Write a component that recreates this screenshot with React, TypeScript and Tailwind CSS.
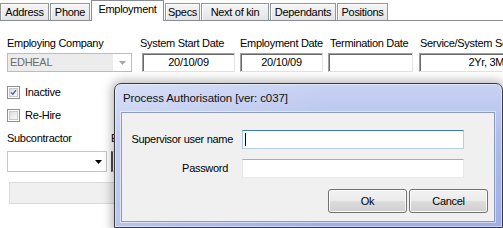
import React from 'react';

const tabs = [
  { label: 'Address', w: 'w-[49px]' },
  { label: 'Phone', w: 'w-[40px]' },
  { label: 'Employment', w: 'w-[73px]', active: true },
  { label: 'Specs', w: 'w-[35px]' },
  { label: 'Next of kin', w: 'w-[68px]' },
  { label: 'Dependants', w: 'w-[66px]' },
  { label: 'Positions', w: 'w-[51px]' },
];

function TabBar() {
  return (
    <div className="flex items-end h-[21px] border-b border-[#898c95]">
      {tabs.map((t, i) =>
        t.active ? (
          <div
            key={t.label}
            className={`${t.w} shrink-0 h-[21px] -mb-px bg-white border border-b-0 border-[#898c95] flex items-start justify-center pt-[2px] ${i > 0 ? 'ml-px' : ''}`}
          >
            {t.label}
          </div>
        ) : (
          <div
            key={t.label}
            className={`${t.w} shrink-0 h-[17px] border border-b-0 border-[#8f969c] bg-[linear-gradient(#f6f6f6,#e4e4e4)] shadow-[inset_1px_1px_0_#ffffff] flex items-center justify-center ${i > 0 ? 'ml-px' : ''}`}
          >
            {t.label}
          </div>
        ),
      )}
    </div>
  );
}

function Sunken({ children, className = '' }: { children?: React.ReactNode; className?: string }) {
  return (
    <div
      className={`h-[19px] bg-white border border-[#a0a0a0] border-r-[#e3e3e3] border-b-[#e3e3e3] shadow-[inset_1px_1px_0_#696969] flex items-center px-[3px] whitespace-nowrap ${className}`}
    >
      {children}
    </div>
  );
}

function CheckBox({ checked, label }: { checked?: boolean; label: string }) {
  return (
    <div className="flex items-center h-[13px] gap-[5px]">
      <div className="w-[13px] h-[13px] border border-[#8e8f8f] bg-white p-px">
        <div className="w-full h-full bg-[linear-gradient(135deg,#dcdcdc,#fbfbfb)] border border-[#c8c8c8] relative">
          {checked && (
            <svg viewBox="0 0 9 9" className="absolute inset-0 w-full h-full">
              <path d="M1.5 4.5 L3.6 6.8 L7.6 1.6" fill="none" stroke="#4a5fa8" strokeWidth="1.7" />
            </svg>
          )}
        </div>
      </div>
      <span>{label}</span>
    </div>
  );
}

function Dialog() {
  return (
    <div className="absolute left-[114px] top-[83px] w-[389px] h-[145px] rounded-t-[7px] border border-[#3a3a3a] bg-[linear-gradient(90deg,rgba(255,255,255,0.28),rgba(255,255,255,0)_55%),linear-gradient(180deg,#c8d3f3,#adbcec_40%,#9eaee6)] shadow-[0_0_10px_3px_rgba(0,0,0,0.25),inset_0_0_0_1px_rgba(255,255,255,0.45)] flex flex-col">
      <div className="h-[28px] flex items-center pl-[8px] text-[11.5px] tracking-[-0.1px] text-[#111]">
        Process Authorisation [ver: c037]
      </div>
      <div className="ml-[6px] mr-[7px] h-[110px] border border-[#8e99b8] bg-[#f0f0f0] shadow-[0_0_0_1px_rgba(255,255,255,0.5)] pt-[17px] pr-[6px] flex flex-col">
        <div className="flex items-center h-[19px]">
          <span className="w-[120px] text-right pr-[9px] whitespace-nowrap">Supervisor user name</span>
          <div className="w-[222px] h-[19px] bg-white border border-[#b5cfe7] border-t-[#3d7bad] border-l-[#a4c9e3] flex items-center pl-[2px]">
            <span className="w-px h-[13px] bg-black" />
          </div>
        </div>
        <div className="flex items-center h-[19px] mt-[10px]">
          <span className="w-[120px] text-right pr-[14px] whitespace-nowrap">Password</span>
          <div className="w-[222px] h-[19px] bg-white border border-[#e3e9ef] border-t-[#abadb3] border-l-[#e2e3ea]" />
        </div>
        <div className="flex justify-end gap-[2px] mt-[11px]">
          {['Ok', 'Cancel'].map((b) => (
            <div
              key={b}
              className="w-[79px] h-[24px] rounded-[3px] border border-[#707070] bg-[linear-gradient(#f2f2f2_0%,#ebebeb_50%,#dddddd_50%,#cfcfcf_100%)] shadow-[inset_0_0_0_1px_#fcfcfc] flex items-center justify-center"
            >
              {b}
            </div>
          ))}
        </div>
      </div>
    </div>
  );
}

export default function App() {
  return (
    <div className="relative w-[503px] h-[228px] overflow-hidden bg-white text-black text-[11px] tracking-[-0.3px] font-['Liberation_Sans',Arial,sans-serif] leading-[13px]">
      <TabBar />

      <div className="flex mt-[16px]">
        <div className="ml-[7px] w-[125px] shrink-0">
          <div className="h-[13px]">Employing Company</div>
          <div className="mt-[3px] h-[19px] border border-[#bcbcbc] flex">
            <div className="flex-1 bg-[#ececec] text-[#6d6d6d] flex items-center pl-[2px]">EDHEAL</div>
            <div className="w-[18px] bg-white flex items-center justify-center">
              <svg width="7" height="4" viewBox="0 0 7 4">
                <path d="M0 0 H7 L3.5 4 Z" fill="#a8a8a8" />
              </svg>
            </div>
          </div>
        </div>
        <div className="ml-[8px] w-[95px] shrink-0">
          <div className="h-[13px]">System Start Date</div>
          <Sunken className="mt-[3px] ml-[2px] justify-center">20/10/09</Sunken>
        </div>
        <div className="ml-[5px] w-[83px] shrink-0">
          <div className="h-[13px]">Employment Date</div>
          <Sunken className="mt-[3px] justify-center">20/10/09</Sunken>
        </div>
        <div className="ml-[5px] w-[85px] shrink-0">
          <div className="h-[13px] pl-[2px]">Termination Date</div>
          <Sunken className="mt-[3px]" />
        </div>
        <div className="ml-[6px] w-[103px] shrink-0">
          <div className="h-[13px] pl-px whitespace-nowrap">Service/System Service</div>
          <Sunken className="mt-[3px] justify-end">2Yr, 3Mths</Sunken>
        </div>
      </div>

      <div className="ml-[7px] mt-[14px] flex flex-col gap-[10px]">
        <CheckBox checked label="Inactive" />
        <CheckBox label="Re-Hire" />
      </div>

      <div className="flex mt-[10px]">
        <div className="ml-[7px] w-[100px] shrink-0">
          <div className="h-[13px]">Subcontractor</div>
          <div className="mt-[6px] h-[21px] border border-[#c6c6c6] bg-white flex items-center justify-end pr-[4px]">
            <svg width="7" height="4" viewBox="0 0 7 4">
              <path d="M0 0 H7 L3.5 4 Z" fill="#000" />
            </svg>
          </div>
        </div>
        <div className="ml-[4px] w-[120px] shrink-0">
          <div className="h-[13px]">Eth</div>
          <div className="mt-[6px] h-[21px] border border-[#c6c6c6] border-l-[2px] border-l-[#4a4a4a] bg-white" />
        </div>
      </div>

      <div className="ml-[9px] mt-[10px] w-[420px] h-[22px] bg-[#f0f0f0] border border-[#dadada]" />

      <Dialog />
    </div>
  );
}
